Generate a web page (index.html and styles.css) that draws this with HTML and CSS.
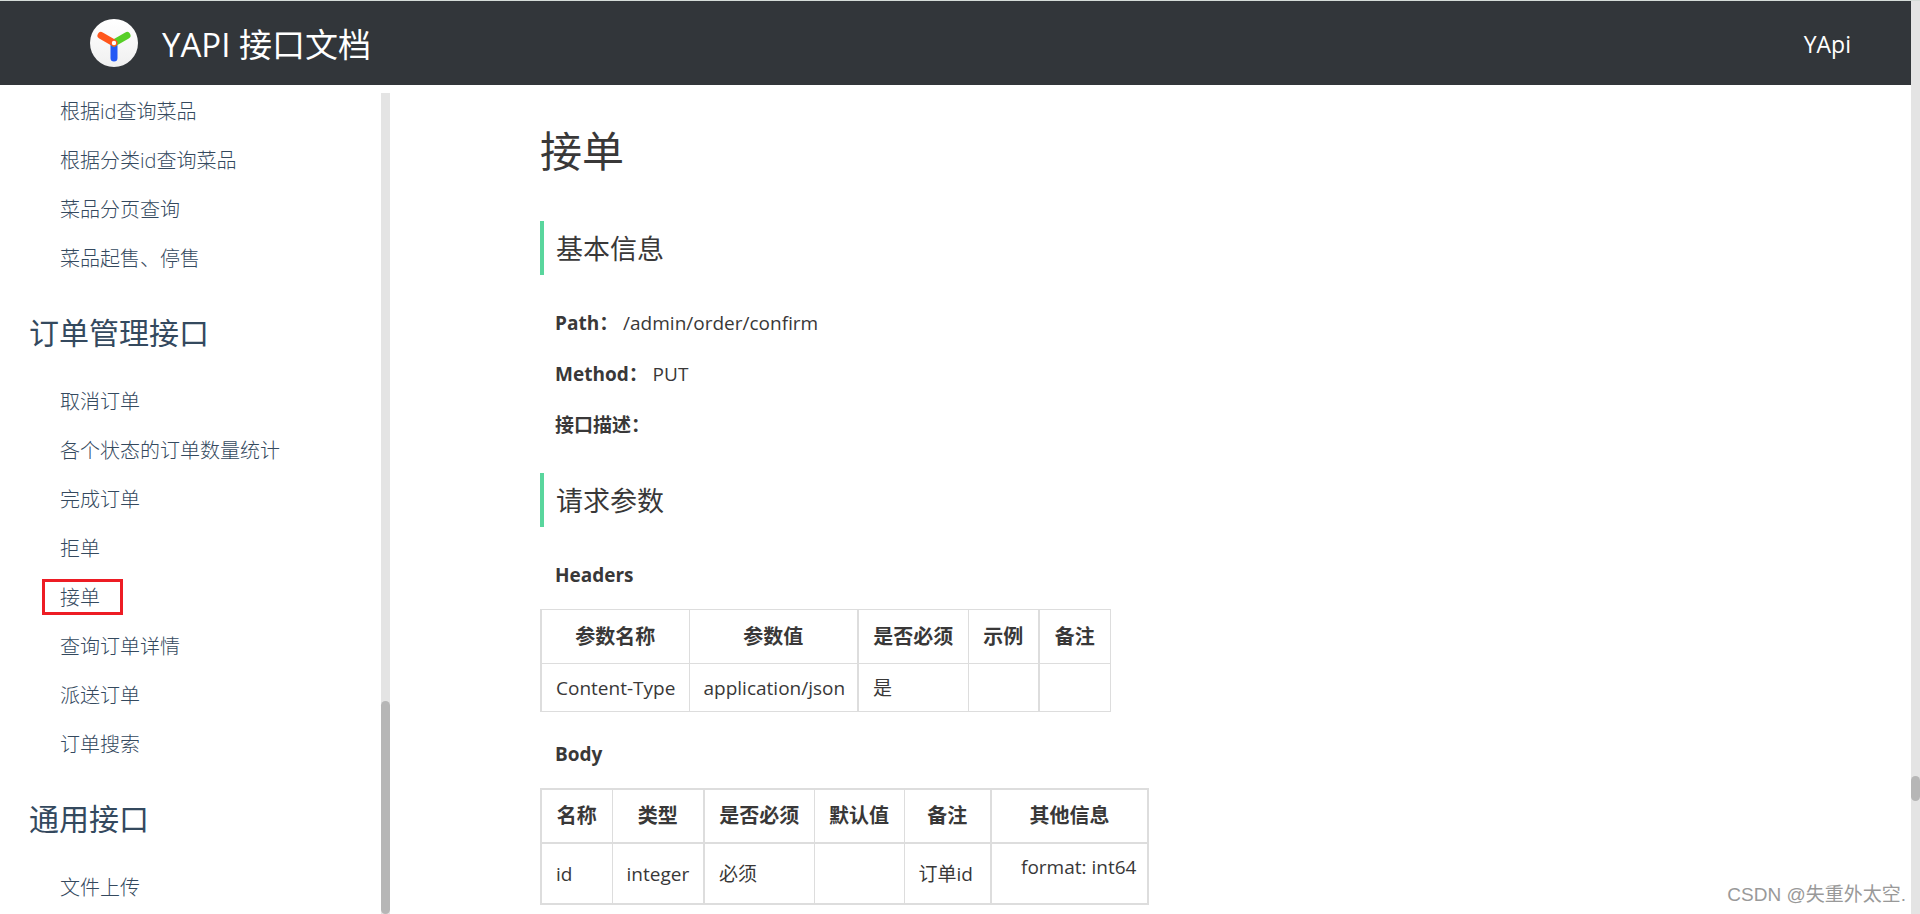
FILE: index.html
```html
<!DOCTYPE html>
<html lang="zh-CN">
<head>
<meta charset="utf-8">
<title>YAPI 接口文档</title>
<link rel="stylesheet" href="styles.css">
</head>
<body>
<div class="page">
  <div class="view">
    <header class="topbar">
      <a class="brand" href="#">
        <svg class="logo" viewBox="0 0 48 48" aria-hidden="true">
          <defs><linearGradient id="disc" x1="0" y1="0" x2="0" y2="1"><stop offset="0" stop-color="#fff"/><stop offset="1" stop-color="#f0f0f0"/></linearGradient></defs>
          <circle cx="24" cy="24" r="24" fill="url(#disc)"/>
          <g fill="none" stroke-width="7" stroke-linecap="round">
            <path d="M24 24V39" stroke="#2358f5"/>
            <path d="M24 24L37 16.500" stroke="#57cf27"/>
            <path d="M11 16.500L24 24" stroke="#ff561b"/>
          </g>
          <circle cx="24" cy="24" r="2.200" fill="#fff"/>
        </svg>
        <span class="brand-name">YAPI 接口文档</span>
      </a>
      <a class="top-link" href="#">YApi</a>
    </header>
    <div class="body">
      <nav class="sidebar">
        <div class="menu">
          <ul class="menu-list">
            <li><a href="#">根据id查询菜品</a></li>
            <li><a href="#">根据分类id查询菜品</a></li>
            <li><a href="#">菜品分页查询</a></li>
            <li><a href="#">菜品起售、停售</a></li>
          </ul>
          <a class="menu-title" href="#">订单管理接口</a>
          <ul class="menu-list">
            <li><a href="#">取消订单</a></li>
            <li><a href="#">各个状态的订单数量统计</a></li>
            <li><a href="#">完成订单</a></li>
            <li><a href="#">拒单</a></li>
            <li class="marked"><a href="#">接单</a></li>
            <li><a href="#">查询订单详情</a></li>
            <li><a href="#">派送订单</a></li>
            <li><a href="#">订单搜索</a></li>
          </ul>
          <a class="menu-title" href="#">通用接口</a>
          <ul class="menu-list">
            <li><a href="#">文件上传</a></li>
          </ul>
        </div>
        <div class="track menu-track"><div class="thumb"></div></div>
      </nav>
      <main class="content">
        <h1>接单</h1>
        <h2>基本信息</h2>
        <p><strong>Path：</strong> /admin/order/confirm</p>
        <p><strong>Method：</strong> PUT</p>
        <p><strong>接口描述：</strong></p>
        <h2>请求参数</h2>
        <h3>Headers</h3>
        <table class="headers-table">
          <colgroup><col class="w-148"><col class="w-169"><col class="w-110"><col class="w-71"><col class="w-71"></colgroup>
          <thead><tr><th class="rule">参数名称</th><th>参数值</th><th class="rule">是否必须</th><th>示例</th><th class="rule">备注</th></tr></thead>
          <tbody><tr><td class="rule">Content-Type</td><td>application/json</td><td class="rule">是</td><td></td><td class="rule"></td></tr></tbody>
        </table>
        <h3>Body</h3>
        <table class="body-table">
          <colgroup><col class="w-71"><col class="w-92"><col class="w-110"><col class="w-90"><col class="w-87"><col class="w-157"></colgroup>
          <thead><tr><th class="rule">名称</th><th>类型</th><th class="rule">是否必须</th><th>默认值</th><th>备注</th><th class="rule">其他信息</th></tr></thead>
          <tbody><tr><td class="rule">id</td><td>integer</td><td class="rule">必须</td><td></td><td>订单id</td><td class="rule extra">format: int64</td></tr></tbody>
        </table>
      </main>
    </div>
  </div>
  <div class="track page-track"><div class="thumb"></div></div>
</div>
<div class="watermark">CSDN @失重外太空.</div>
</body>
</html>
```
FILE: styles.css
```css
*, *::before { box-sizing: border-box; }
body {
  margin: 0;
  color: #393838;
  background: #fff;
  font: 19px/28px "Open Sans", "Noto Sans CJK SC", sans-serif;
}
a { color: inherit; text-decoration: none; }
ul { margin: 0; padding: 0; list-style: none; }

.page {
  display: flex;
  height: 100vh;
  overflow: hidden;
  border-top: 1px solid #d5dcd8;
}
.view { flex: 1; min-width: 0; display: flex; flex-direction: column; }

.topbar {
  flex: none;
  display: flex;
  align-items: center;
  justify-content: space-between;
  height: 84px;
  padding: 0 60px 0 90px;
  color: #fff;
  background: #32363a;
}
.brand { display: flex; align-items: center; gap: 24px; }
.logo { width: 48px; height: 48px; }
.brand-name { padding-top: 4px; font-size: 33px; line-height: 48px; }
.top-link { padding-top: 2px; font-size: 23px; }

.body { flex: 1; min-height: 0; display: flex; }
.sidebar { flex: none; width: 390px; display: flex; color: #34495e; }
.menu { flex: 1; padding-top: 2px; overflow: hidden; }
.menu-list { padding-left: 60px; font-size: 20px; font-weight: 300; }
.menu-list li { position: relative; line-height: 49px; }
.menu-title {
  display: block;
  margin-top: 6px;
  padding-left: 29px;
  font-size: 30px;
  line-height: 88px;
}
.marked::before {
  content: "";
  position: absolute;
  left: -18px;
  top: 6px;
  width: 81px;
  height: 36px;
  border: 3px solid #ed1c24;
}

.track { flex: none; width: 9px; background: #e4e4e4; }
.thumb { border-radius: 5px; background: #b6b6b6; }
.menu-track { margin-top: 8px; display: flex; flex-direction: column; justify-content: flex-end; }
.menu-track .thumb { height: 26%; }
.page-track { padding-top: 775px; }
.page-track .thumb { height: 25px; }

.content { flex: 1; min-width: 0; padding: 36px 150px 0; overflow: hidden; }
h1 { margin: 0 0 40px; font-size: 42px; font-weight: 400; line-height: 60px; }
h2 {
  margin: 0 0 34px;
  padding: 2px 0 0 12px;
  border-left: 4px solid #59d69d;
  font-size: 27px;
  font-weight: 400;
  line-height: 52px;
}
p { margin: 0 0 23px; padding-left: 15px; }
p + h2 { margin-top: 34px; }
h3 { margin: 0 0 20px; padding-left: 15px; font-size: 19px; line-height: 28px; }

table { border-collapse: collapse; table-layout: fixed; }
th, td { border: 1px solid #ddd; padding: 0 14px; white-space: nowrap; }
th { height: 54px; font-size: 20px; }
td { height: 48px; }
.rule { border-left-width: 2px; }
.headers-table { width: 569px; margin-bottom: 28px; }
.body-table { width: 607px; border: 2px solid #ddd; }
.body-table td { height: 61px; border-top-width: 2px; }
.body-table .extra { padding: 9px 14px 0 29px; vertical-align: top; }
.w-71 { width: 71px; }
.w-87 { width: 87px; }
.w-90 { width: 90px; }
.w-92 { width: 92px; }
.w-110 { width: 110px; }
.w-148 { width: 148px; }
.w-157 { width: 157px; }
.w-169 { width: 169px; }

.watermark {
  position: absolute;
  right: 14px;
  bottom: 5px;
  color: #999;
  font: 19px/28px "Liberation Sans", "Noto Sans CJK SC", sans-serif;
  text-shadow: -1px -1px 0 #fff;
}
```
